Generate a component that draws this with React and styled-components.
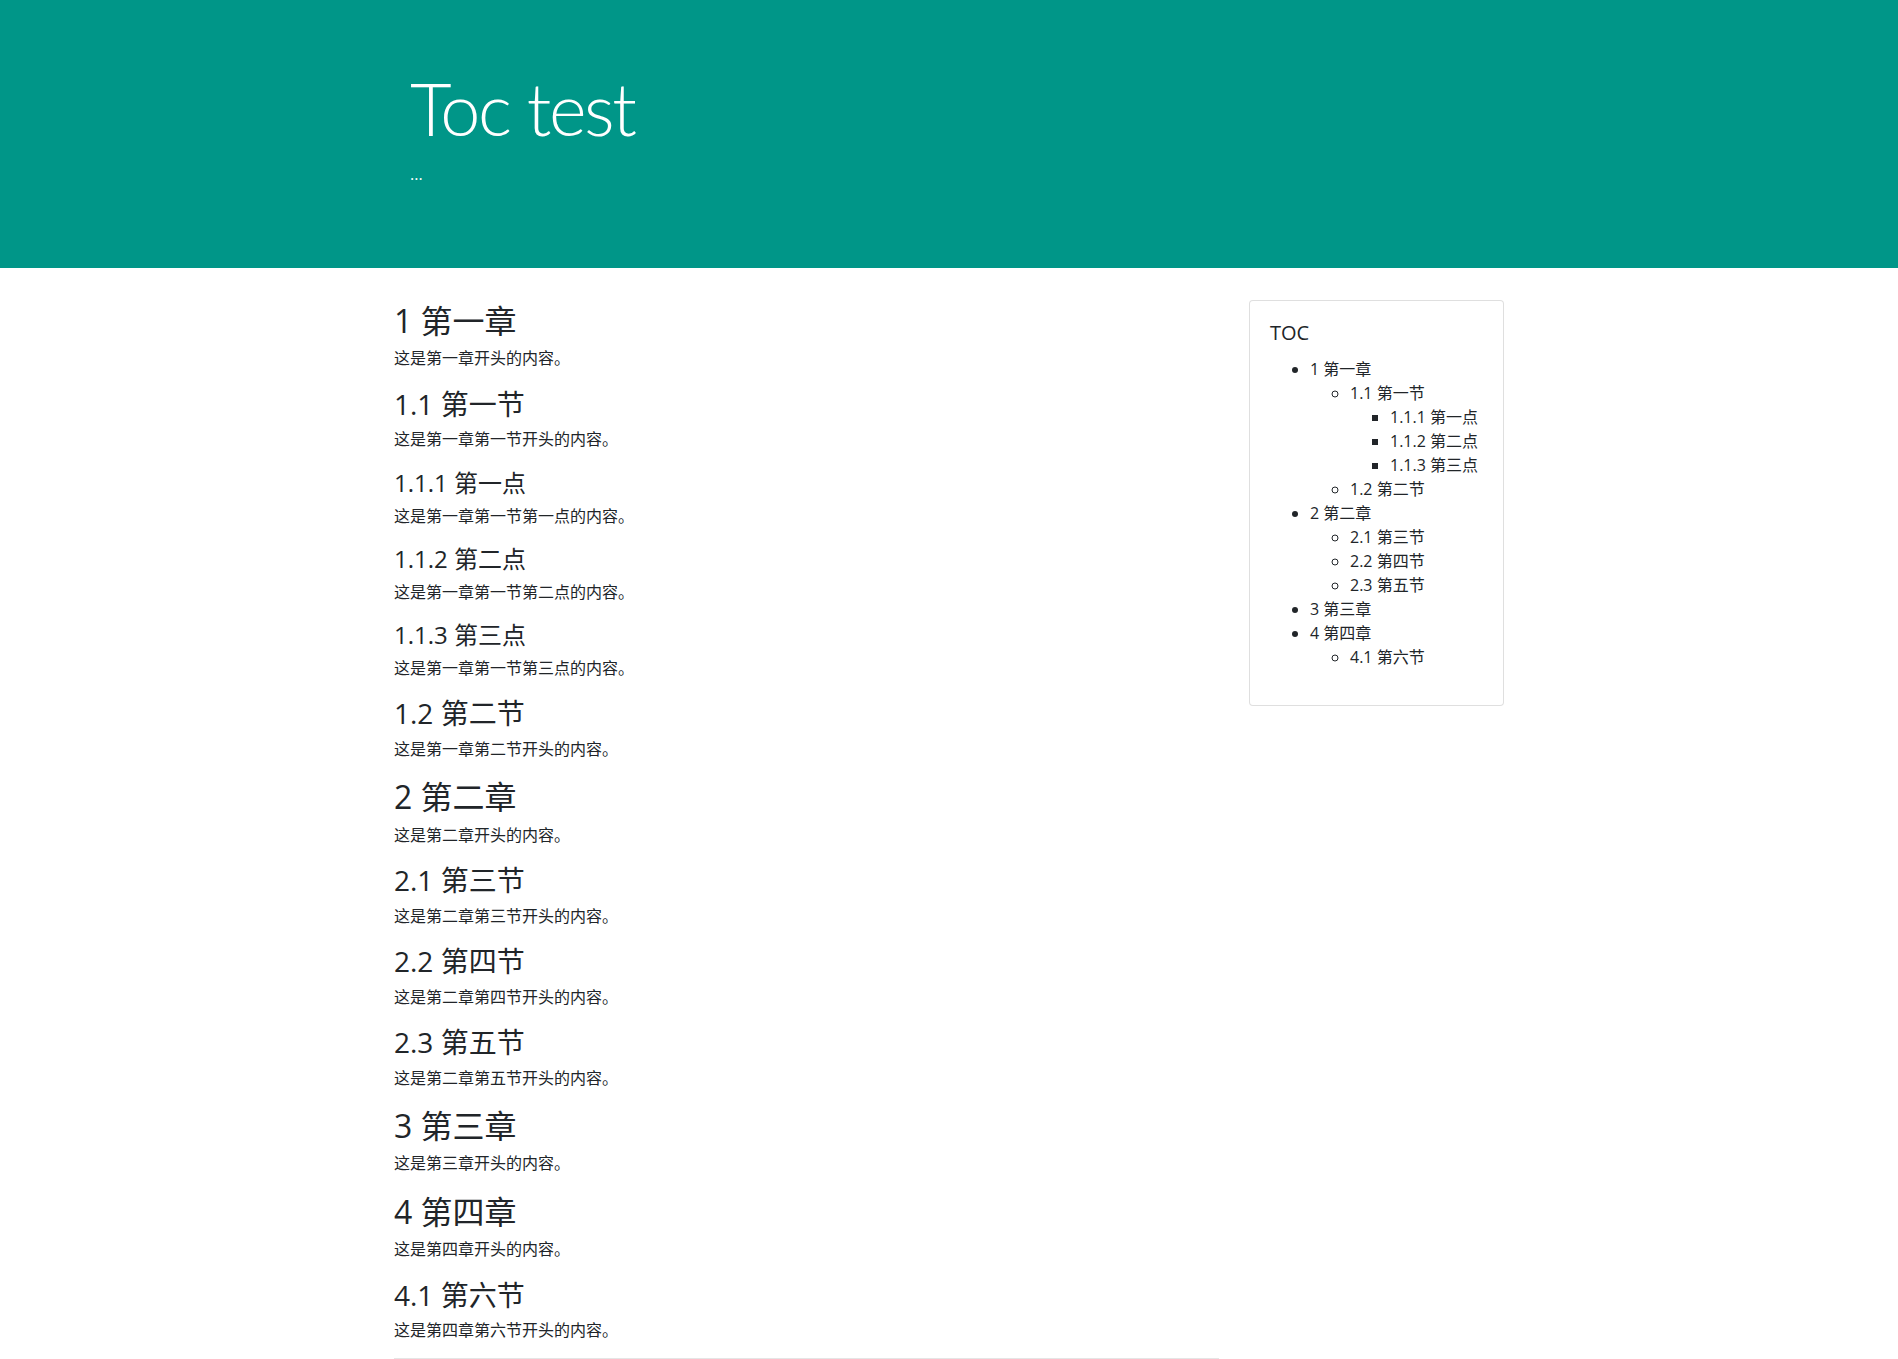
import React from "react";
import styled, { createGlobalStyle } from "styled-components";

const GlobalStyle = createGlobalStyle`
  *, *::before, *::after { box-sizing: border-box; }
  html, body { margin: 0; padding: 0; }
  body {
    font-family: "Open Sans", "Noto Sans CJK SC", sans-serif;
    font-size: 16px;
    line-height: 1.5;
    color: #212529;
    background: #fff;
  }
`;

const Header = styled.header`
  background: #009688;
  color: #fff;
  padding: 63px 0 66px;
  margin-bottom: 32px;
`;

const Container = styled.div`
  width: 1140px;
  margin: 0 auto;
  padding: 0 15px;
`;

const HeaderInner = styled.div`
  padding: 0 16px;
`;

const Title = styled.h1`
  margin: 0 0 8px;
  height: 91px;
  font-family: "Lato", "Open Sans", sans-serif;
  font-weight: 300;
  font-size: 72px;
  line-height: 91px;
  letter-spacing: -2.4px;
`;

const Subtitle = styled.p`
  margin: 0 0 16px;
  height: 24px;
  font-size: 16px;
  line-height: 24px;
`;

const Layout = styled.div`
  display: grid;
  grid-template-columns: 1fr 255px;
  column-gap: 30px;
  align-items: start;
`;

const Article = styled.article``;

const sizes = { 1: 32, 2: 28, 3: 24 };

const Heading = styled.h2`
  margin: 0 0 8px;
  padding-top: 2px;
  font-size: ${(p) => sizes[p.$level]}px;
  height: ${(p) => sizes[p.$level] * 1.2}px;
  font-weight: 400;
  line-height: ${(p) => sizes[p.$level] * 1.2}px;
  color: #212529;
`;

const Para = styled.p`
  margin: 0 0 15.4px;
  height: 24px;
  line-height: 24px;
`;

const Rule = styled.hr`
  margin: 16px 0 0;
  border: 0;
  border-top: 1px solid rgba(0, 0, 0, 0.1);
`;

const TocCard = styled.aside`
  border: 1px solid rgba(0, 0, 0, 0.125);
  border-radius: 4px;
  padding: 20px;
  background: #fff;
`;

const TocTitle = styled.h5`
  margin: 0 0 12px;
  height: 24px;
  font-size: 20px;
  font-weight: 500;
  line-height: 1.2;
`;

const TocList = styled.ul`
  margin: 0 0 ${(p) => (p.$nested ? 0 : 16)}px;
  padding-left: 40px;
  list-style-type: ${(p) => p.$bullet};
`;

const TocItem = styled.li`
  line-height: 24px;
`;

const TocLink = styled.a`
  color: #212529;
  text-decoration: none;
`;

const sections = [
  { id: "1", level: 1, title: "1 第一章", text: "这是第一章开头的内容。" },
  { id: "1.1", level: 2, title: "1.1 第一节", text: "这是第一章第一节开头的内容。" },
  { id: "1.1.1", level: 3, title: "1.1.1 第一点", text: "这是第一章第一节第一点的内容。" },
  { id: "1.1.2", level: 3, title: "1.1.2 第二点", text: "这是第一章第一节第二点的内容。" },
  { id: "1.1.3", level: 3, title: "1.1.3 第三点", text: "这是第一章第一节第三点的内容。" },
  { id: "1.2", level: 2, title: "1.2 第二节", text: "这是第一章第二节开头的内容。" },
  { id: "2", level: 1, title: "2 第二章", text: "这是第二章开头的内容。" },
  { id: "2.1", level: 2, title: "2.1 第三节", text: "这是第二章第三节开头的内容。" },
  { id: "2.2", level: 2, title: "2.2 第四节", text: "这是第二章第四节开头的内容。" },
  { id: "2.3", level: 2, title: "2.3 第五节", text: "这是第二章第五节开头的内容。" },
  { id: "3", level: 1, title: "3 第三章", text: "这是第三章开头的内容。" },
  { id: "4", level: 1, title: "4 第四章", text: "这是第四章开头的内容。" },
  { id: "4.1", level: 2, title: "4.1 第六节", text: "这是第四章第六节开头的内容。" },
];

function buildTree(items) {
  const root = [];
  const stack = [{ level: 0, children: root }];
  items.forEach((it) => {
    const node = { ...it, children: [] };
    while (stack[stack.length - 1].level >= it.level) stack.pop();
    stack[stack.length - 1].children.push(node);
    stack.push(node);
  });
  return root;
}

const bullets = ["disc", "circle", "square"];

function TocTree({ nodes, depth = 0 }) {
  return (
    <TocList $nested={depth > 0} $bullet={bullets[depth] || "square"}>
      {nodes.map((n) => (
        <TocItem key={n.id}>
          <TocLink href={`#s-${n.id}`}>{n.title}</TocLink>
          {n.children.length > 0 && <TocTree nodes={n.children} depth={depth + 1} />}
        </TocItem>
      ))}
    </TocList>
  );
}

export default function App() {
  const tree = buildTree(sections);
  return (
    <>
      <GlobalStyle />
      <Header>
        <Container>
          <HeaderInner>
            <Title>Toc test</Title>
            <Subtitle>...</Subtitle>
          </HeaderInner>
        </Container>
      </Header>
      <Container>
        <Layout>
          <Article>
            {sections.map((s) => (
              <React.Fragment key={s.id}>
                <Heading as={s.level === 1 ? "h2" : s.level === 2 ? "h3" : "h4"} $level={s.level} id={`s-${s.id}`}>
                  {s.title}
                </Heading>
                <Para>{s.text}</Para>
              </React.Fragment>
            ))}
            <Rule />
          </Article>
          <TocCard>
            <TocTitle>TOC</TocTitle>
            <TocTree nodes={tree} />
          </TocCard>
        </Layout>
      </Container>
    </>
  );
}
